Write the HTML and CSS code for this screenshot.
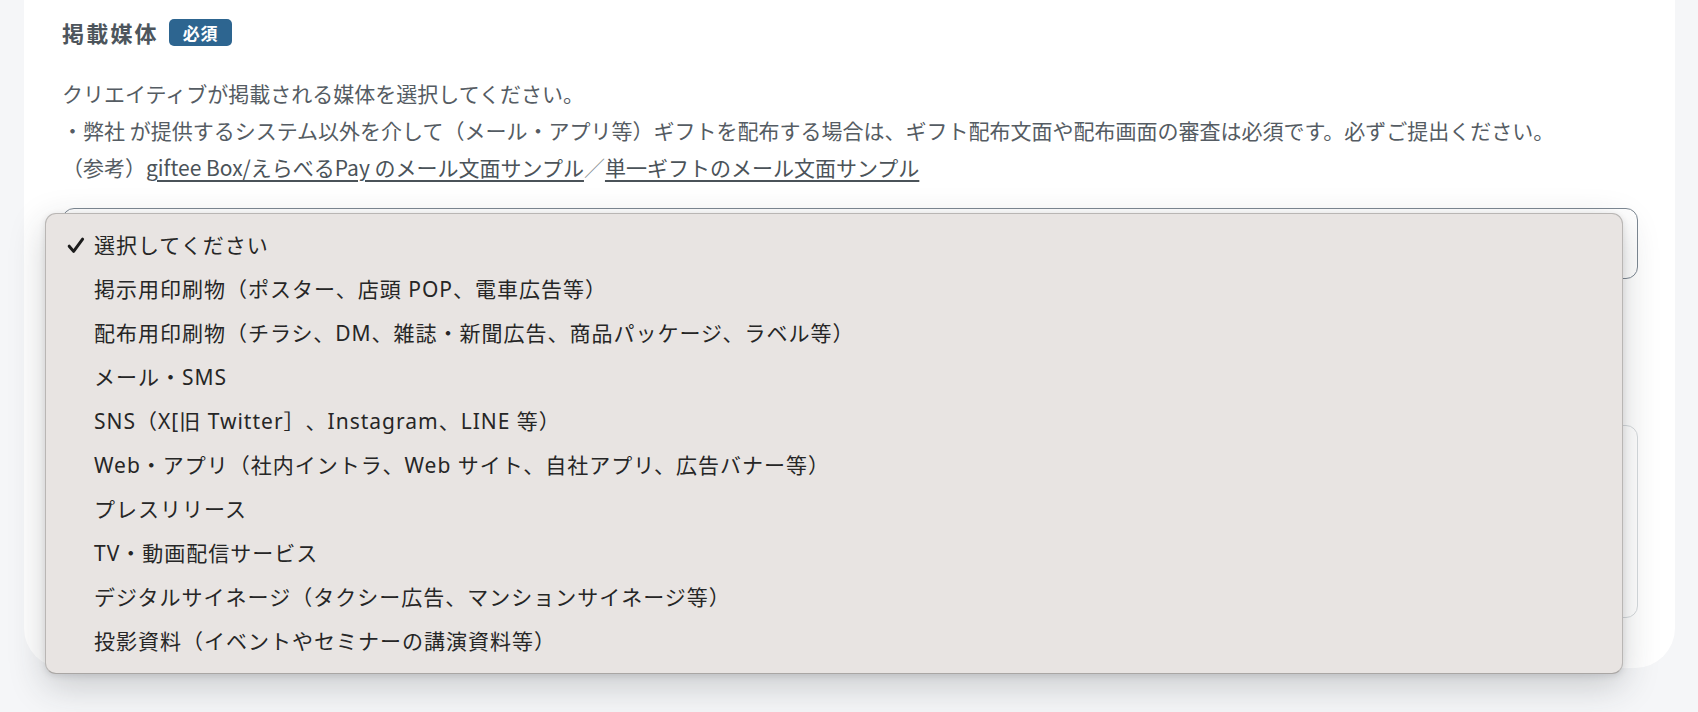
FILE: index.html
```html
<!DOCTYPE html>
<html lang="ja">
<head>
<meta charset="utf-8">
<title>掲載媒体</title>
<link rel="stylesheet" href="styles.css">
</head>
<body>
<main class="page">
  <section class="card">
    <div class="field">
      <div class="field-head">
        <h2 class="field-title">掲載媒体</h2>
        <span class="badge">必須</span>
      </div>
      <div class="field-desc">
        <p>クリエイティブが掲載される媒体を選択してください。</p>
        <p>・弊社 が提供するシステム以外を介して（メール・アプリ等）ギフトを配布する場合は、ギフト配布文面や配布画面の審査は必須です。必ずご提出ください。</p>
        <p>（参考）<a class="link" href="#">giftee Box/えらべるPay のメール文面サンプル</a><span class="sep">／</span><a class="link" href="#">単一ギフトのメール文面サンプル</a></p>
      </div>
      <div class="select-wrap">
        <div class="select"></div>
        <ul class="popup">
          <li class="opt opt-checked"><svg class="check" width="18" height="17" viewBox="0 0 18 17"><path d="M2.2 9.2 L6.6 14.4 L15.6 2.2" fill="none" stroke="#1c1c1c" stroke-width="3" stroke-linecap="round" stroke-linejoin="round"/></svg>選択してください</li>
          <li class="opt">掲示用印刷物（ポスター、店頭 POP、電車広告等）</li>
          <li class="opt">配布用印刷物（チラシ、DM、雑誌・新聞広告、商品パッケージ、ラベル等）</li>
          <li class="opt">メール・SMS</li>
          <li class="opt">SNS（X[旧 Twitter］、Instagram、LINE 等）</li>
          <li class="opt">Web・アプリ（社内イントラ、Web サイト、自社アプリ、広告バナー等）</li>
          <li class="opt">プレスリリース</li>
          <li class="opt">TV・動画配信サービス</li>
          <li class="opt">デジタルサイネージ（タクシー広告、マンションサイネージ等）</li>
          <li class="opt">投影資料（イベントやセミナーの講演資料等）</li>
        </ul>
      </div>
    </div>
    <div class="field field-next">
      <div class="textarea"></div>
    </div>
  </section>
</main>
</body>
</html>
```

FILE: styles.css
```css
html, body {
  margin: 0;
  padding: 0;
}

body {
  background: #f5f6f8;
  font-family: "Noto Sans CJK JP", "Noto Sans", sans-serif;
  color: #545b62;
  width: 1698px;
  height: 712px;
  overflow: hidden;
}

.page {
  padding: 0 23px 0 24px;
}

.card {
  background: #ffffff;
  border-radius: 0 0 40px 40px;
  padding: 16px 37px 50px 38px;
}

.field-head {
  display: flex;
  align-items: center;
  height: 32px;
}

.field-title {
  margin: 0;
  font-size: 22px;
  line-height: 32px;
  font-weight: 700;
  letter-spacing: 0.1em;
  color: #4d555c;
}

.badge {
  margin-left: 10px;
  height: 27px;
  padding: 0 14px;
  border-radius: 5px;
  background: #2d6590;
  color: #ffffff;
  font-size: 17px;
  font-weight: 700;
  letter-spacing: 0.04em;
  line-height: 27px;
}

.field-desc {
  margin-top: 27px;
  font-size: 21px;
  line-height: 37px;
  color: #555c63;
}

.field-desc p {
  margin: 0;
}

.link {
  color: #4b5359;
  text-decoration: underline;
  text-decoration-thickness: 2px;
  text-underline-offset: 4px;
}

.sep {
  color: #8a9096;
}

.select-wrap {
  position: relative;
  margin-top: 22px;
}

.select {
  height: 69px;
  border: 1px solid #7d8893;
  border-radius: 12px;
  background: #ffffff;
}

.popup {
  position: absolute;
  left: -17px;
  top: 5px;
  width: 1578px;
  margin: 0;
  padding: 9px 0 10px;
  list-style: none;
  box-sizing: border-box;
  background: #e8e4e2;
  border: 1px solid #b9b6b4;
  border-bottom-color: #a9a6a4;
  border-radius: 11px;
  box-shadow: 0 12px 36px rgba(40, 44, 52, 0.22), 0 2px 6px rgba(40, 44, 52, 0.12);
  z-index: 10;
}

.opt {
  position: relative;
  height: 44px;
  line-height: 44px;
  padding-left: 48px;
  font-family: "Noto Sans", "Noto Sans CJK JP", sans-serif;
  font-size: 21px;
  letter-spacing: 1px;
  color: #262626;
  white-space: nowrap;
  text-spacing-trim: space-all;
}

.check {
  position: absolute;
  left: 21px;
  top: 14px;
}

.field-next {
  margin-top: 146px;
}

.textarea {
  height: 191px;
  border: 1px solid #d6dadd;
  border-radius: 12px;
  background: #ffffff;
}
```
